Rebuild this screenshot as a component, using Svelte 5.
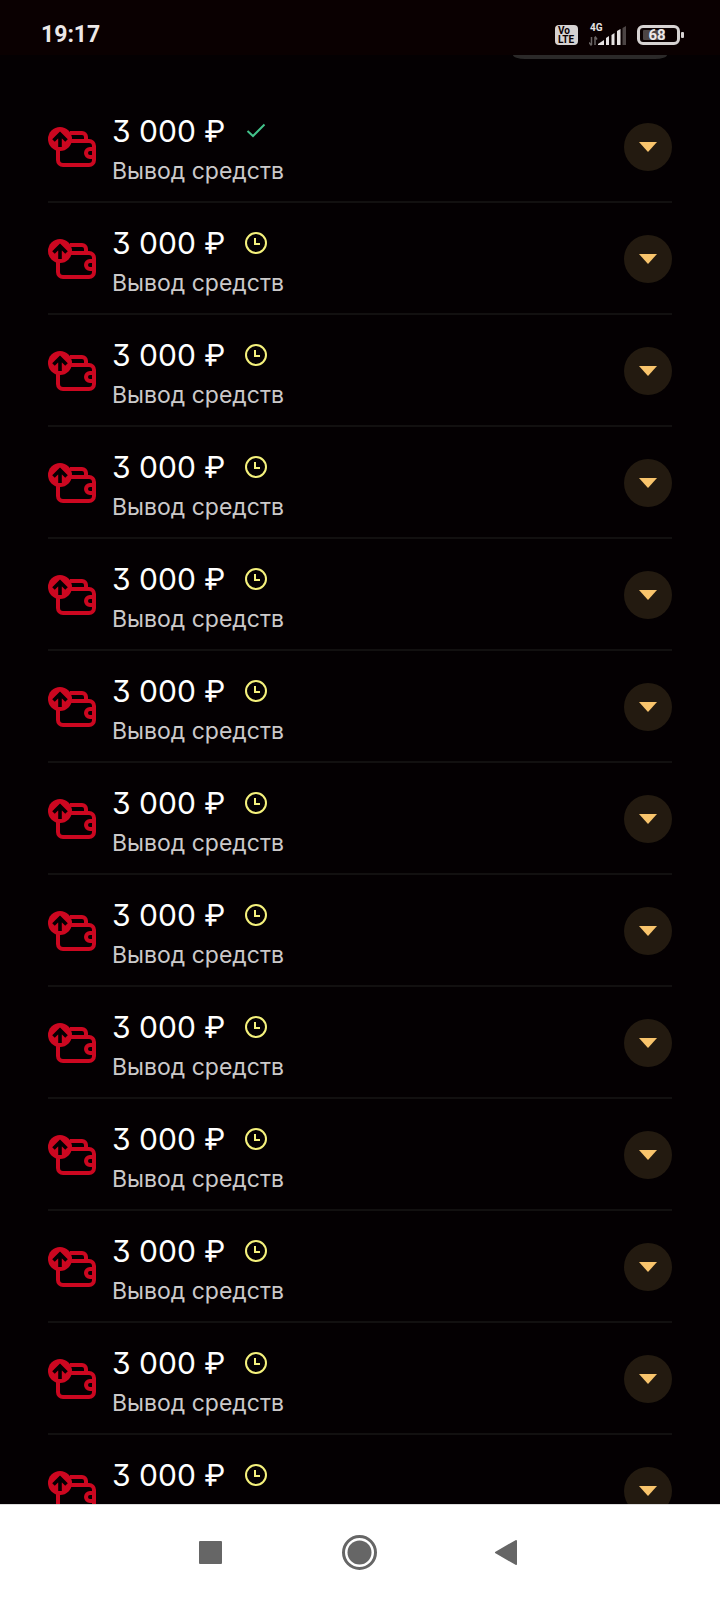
<script>
  // newest first, only the latest withdrawal is confirmed
  let operations = $state(
    Array.from({ length: 13 }, (_, i) => ({
      id: i,
      amount: "3 000 ₽",
      title: "Вывод средств",
      done: i === 0,
      open: false,
    }))
  );

  function toggle(op) {
    op.open = !op.open;
  }
</script>

<div class="screen">
  <header class="statusbar">
    <time>19:17</time>
    <div class="indicators">
      <svg width="24" height="22" viewBox="0 0 24 22" aria-label="VoLTE">
        <rect x="0" y="1" width="23" height="20" rx="4" fill="#d6d2d2" />
        <text class="badge" x="3" y="10">Vo</text>
        <text class="badge" x="3" y="19">LTE</text>
      </svg>
      <svg width="38" height="24" viewBox="0 0 38 24" aria-label="4G">
        <text class="net" x="1" y="8">4G</text>
        <path d="M2.500 14v8M0 19.500l2.500 3M6 22v-8M8 16.500l-2-3" stroke="#6a6464" stroke-width="1.500" fill="none" />
        <path d="M9 22v-1l6-4v5zM17 22v-7l3-2v9zM22.500 22V12l3-2v12zM28 22V8l3.500-2v16z" fill="#e6e2e2" />
        <path d="M33.500 22V5l3.500-2v19z" fill="#4c4444" />
      </svg>
      <svg width="48" height="22" viewBox="0 0 48 22" aria-label="68%">
        <rect x="1.500" y="2.500" width="40" height="17" rx="4.500" fill="none" stroke="#d6d2d2" stroke-width="3" />
        <rect x="6" y="6" width="22" height="10" rx="1" fill="#4c4444" />
        <rect x="44" y="8" width="3" height="6" rx="1" fill="#d6d2d2" />
        <text class="level" x="20" y="16">68</text>
      </svg>
    </div>
  </header>

  <main>
    <div class="tab"></div>

    <ul class="list">
      {#each operations as op (op.id)}
        <li class="row">
          <svg width="48" height="48" viewBox="0 0 48 48" fill="none" aria-hidden="true">
            <path d="M10 26v11a5 5 0 0 0 5 5h26a5 5 0 0 0 5-5V23a5 5 0 0 0-5-5H23" stroke="#cc0720" stroke-width="4" />
            <path d="M22 10h12a4 4 0 0 1 4 4v4" stroke="#cc0720" stroke-width="4" />
            <path d="M46 26h-4a4 4 0 0 0 0 8h4" stroke="#cc0720" stroke-width="4" />
            <circle cx="12" cy="16" r="12" fill="#cc0720" />
            <path d="M12 24V12M5.500 17.500L12 11l6.500 6.500" stroke="#040002" stroke-width="3.600" />
          </svg>

          <div class="info">
            <div class="amount">
              <span>{op.amount}</span>
              {#if op.done}
                <svg width="24" height="24" viewBox="0 0 24 24" fill="none" aria-label="Выполнено">
                  <path d="M3.500 12L9 17L20.500 5.500" stroke="#43c28b" stroke-width="2" />
                </svg>
              {:else}
                <svg width="24" height="24" viewBox="0 0 24 24" fill="none" aria-label="В обработке">
                  <circle cx="12" cy="12" r="10" stroke="#f5f17c" stroke-width="2" />
                  <path d="M11 7v6h5" stroke="#f5f17c" stroke-width="2" />
                </svg>
              {/if}
            </div>
            <div class="title">{op.title}</div>
          </div>

          <button class="more" aria-label="Подробнее" aria-expanded={op.open} onclick={() => toggle(op)}>
            <svg class:flip={op.open} width="18" height="10" viewBox="0 0 18 10">
              <path d="M0 0h18L9 10z" fill="#f8c46c" />
            </svg>
          </button>
        </li>
      {/each}
    </ul>
  </main>

  <nav>
    <button aria-label="Recent apps">
      <svg width="48" height="48" viewBox="0 0 48 48">
        <rect x="13" y="12" width="23" height="23" rx="1" fill="#666" />
      </svg>
    </button>
    <button aria-label="Home">
      <svg width="48" height="48" viewBox="0 0 48 48">
        <circle cx="23.500" cy="23.500" r="16" fill="none" stroke="#666" stroke-width="3" />
        <circle cx="23.500" cy="23.500" r="12" fill="#666" />
      </svg>
    </button>
    <button aria-label="Back">
      <svg width="48" height="48" viewBox="0 0 48 48">
        <path d="M30 12L10 23.500L30 35z" fill="#666" stroke="#666" stroke-width="2" stroke-linejoin="round" />
      </svg>
    </button>
  </nav>
</div>

<style>
  :global(body) { margin: 0; background: #040002; }
  .screen { display: flex; flex-direction: column; height: 100vh; background: #040002; font-family: Inter, "Noto Sans", sans-serif; }
  svg { display: block; flex: none; }
  button { border: 0; padding: 0; cursor: pointer; }

  .statusbar { display: flex; flex: none; align-items: center; justify-content: space-between; box-sizing: border-box; height: 55px; padding: 15px 35px 0 41px; background: #0a0001; font-family: Roboto, sans-serif; }
  time { color: #ece8e8; font-size: 23px; line-height: 28px; font-weight: 700; }
  .indicators { display: flex; align-items: center; gap: 10px; }
  .badge { fill: #0a0001; font-size: 10px; font-weight: 700; }
  .net { fill: #e6e2e2; font-size: 10px; font-weight: 700; }
  .level { fill: #ece8e8; font-size: 15px; font-weight: 700; text-anchor: middle; }

  main { flex: 1; min-height: 0; overflow: hidden; padding: 0 48px; }
  .tab { width: 154px; height: 4px; margin: 0 5px 32px auto; border-radius: 0 0 12px 12px / 0 0 4px 4px; background: #2b2929; }

  .list { list-style: none; margin: 0; padding: 0; }
  .row { display: flex; align-items: center; gap: 16px; padding: 16px 0 14px; border-bottom: 2px solid #121010; }
  .info { flex: 1; min-width: 0; }
  .amount { display: flex; align-items: center; gap: 19px; color: #fff; font-size: 30px; line-height: 48px; font-feature-settings: "cv09"; }
  .title { color: #cbc9ca; font-size: 23px; line-height: 32px; }
  .more { display: flex; flex: none; align-items: center; justify-content: center; width: 48px; height: 48px; border-radius: 50%; background: #231a10; }
  .flip { transform: rotate(180deg); }

  nav { display: flex; flex: none; justify-content: center; box-sizing: border-box; height: 96px; border-top: 1px solid #ddd; background: #fff; }
  nav button { display: flex; align-items: center; justify-content: center; width: 150px; background: none; }
</style>
